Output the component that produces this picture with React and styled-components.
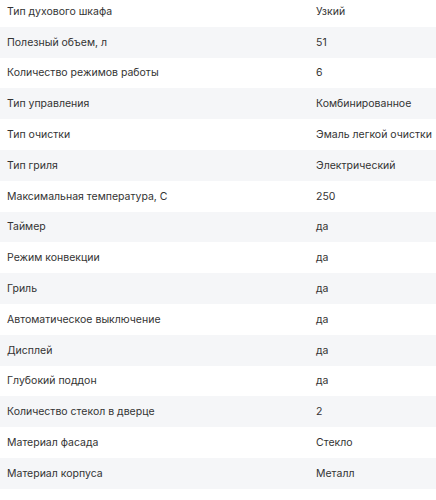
import React from 'react';
import styled, { createGlobalStyle } from 'styled-components';

const GlobalStyle = createGlobalStyle`
  body {
    margin: 0;
    background: #fff;
    font-family: Inter, "Noto Sans", sans-serif;
  }
`;

const Table = styled.div`
  display: flex;
  flex-direction: column;
  width: 436px;
  margin-top: -4px;
`;

const Row = styled.div`
  display: grid;
  grid-template-columns: 309px 1fr;
  align-items: center;
  height: 30.8px;
  padding-left: 7px;
  background: ${(p) => (p.$shaded ? '#f5f6f8' : '#fff')};
  font-size: 10.5px;
  color: #333;
  white-space: nowrap;
`;

const Cell = styled.span``;

const specs = [
  ['Тип духового шкафа', 'Узкий'],
  ['Полезный объем, л', '51'],
  ['Количество режимов работы', '6'],
  ['Тип управления', 'Комбинированное'],
  ['Тип очистки', 'Эмаль легкой очистки'],
  ['Тип гриля', 'Электрический'],
  ['Максимальная температура, С', '250'],
  ['Таймер', 'да'],
  ['Режим конвекции', 'да'],
  ['Гриль', 'да'],
  ['Автоматическое выключение', 'да'],
  ['Дисплей', 'да'],
  ['Глубокий поддон', 'да'],
  ['Количество стекол в дверце', '2'],
  ['Материал фасада', 'Стекло'],
  ['Материал корпуса', 'Металл'],
];

export default function App() {
  return (
    <>
      <GlobalStyle />
      <Table>
        {specs.map(([name, value], i) => (
          <Row key={name} $shaded={i % 2 === 1}>
            <Cell>{name}</Cell>
            <Cell>{value}</Cell>
          </Row>
        ))}
      </Table>
    </>
  );
}
